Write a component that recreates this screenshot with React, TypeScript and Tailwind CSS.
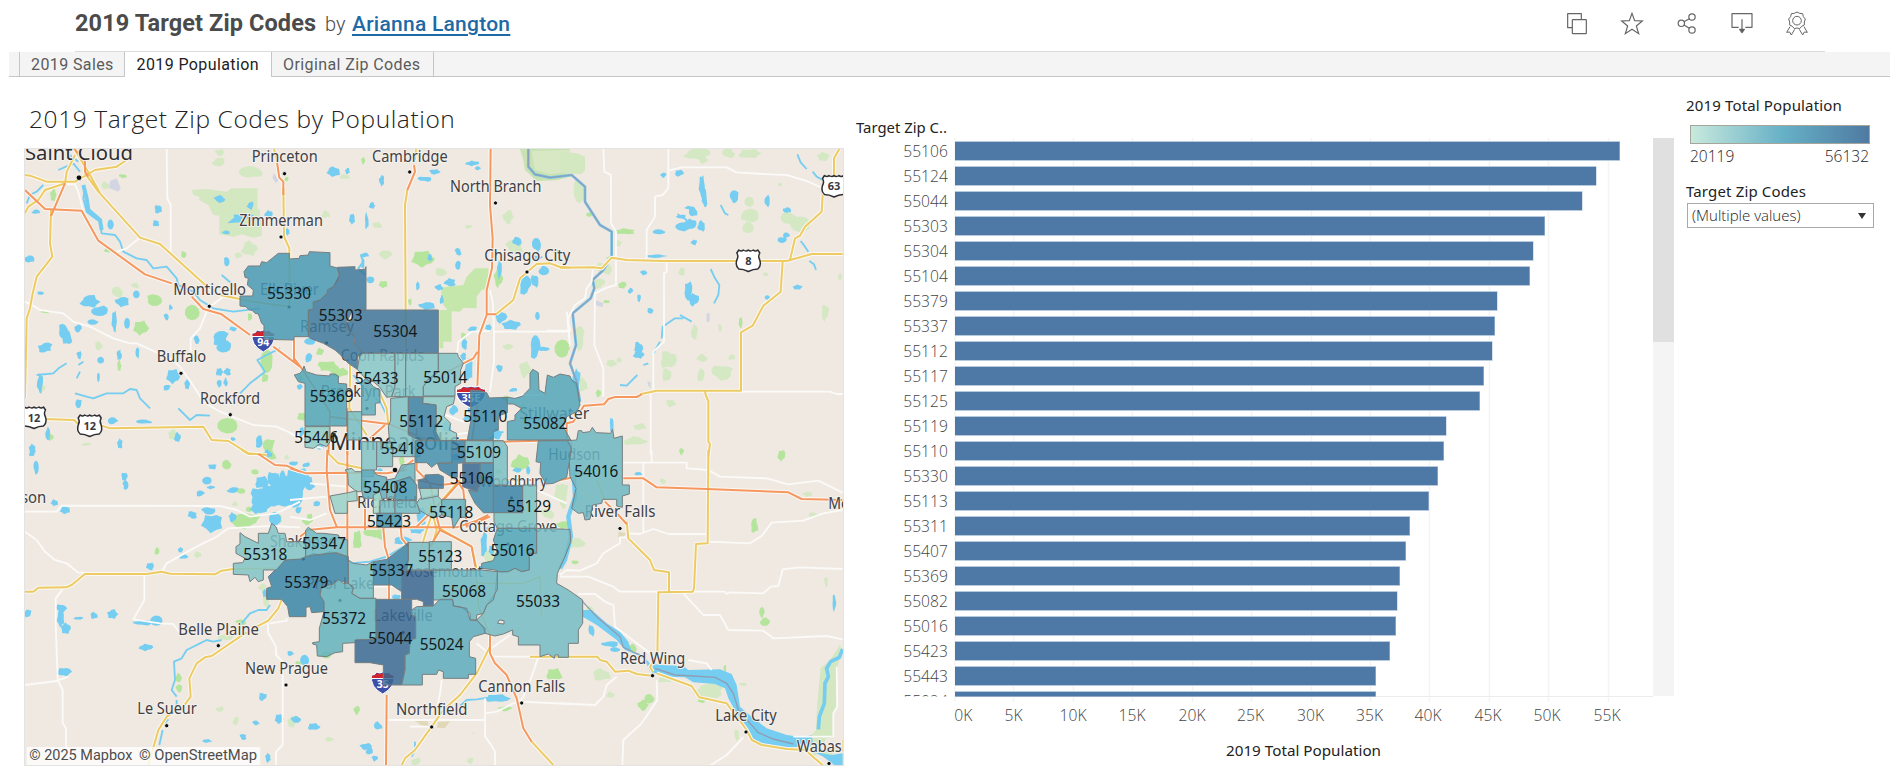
import React from "react";

type Blob = [number, number, number, number];

interface Tile {
  x: number;
  y: number;
  water: Blob[];
  park: Blob[];
  meadow: Blob[];
  streams: string[];
  minor: string[];
  highway: string[];
  freeway: string[];
}

function blobPath([cx, cy, rx, ry]: Blob): string {
  const n = 11;
  const pts: string[] = [];
  for (let i = 0; i < n; i++) {
    const h = Math.abs(Math.sin(cx * 12.9 + cy * 78.2 + i * 37.7) * 43758.5) % 1;
    const r = 0.68 + h * 0.55;
    const a = (i / n) * Math.PI * 2;
    pts.push(`${(cx + Math.cos(a) * rx * r).toFixed(1)},${(cy + Math.sin(a) * ry * r).toFixed(1)}`);
  }
  return `M${pts.join("L")}Z`;
}

const blobs = (list: Blob[]) => list.map(blobPath).join("");

const tiles: Tile[] = [
  {
    x: 20,
    y: 145,
    water: [
      [48, 200, 12, 7], [415, 192, 12, 14], [408, 235, 10, 10], [272, 238, 9, 14], [602, 163, 12, 10], [693, 180, 8, 10],
      [745, 208, 12, 12], [28, 342, 14, 12], [620, 352, 10, 14], [62, 445, 12, 5], [210, 470, 28, 18], [238, 498, 28, 16],
      [306, 470, 20, 15], [350, 448, 11, 12], [283, 530, 8, 30], [322, 535, 9, 16], [175, 550, 10, 14], [130, 560, 16, 22], [142, 578, 15, 20],
      [218, 530, 15, 8], [75, 608, 22, 16], [178, 630, 8, 12], [242, 645, 10, 10], [298, 630, 7, 18], [352, 625, 6, 16],
      [235, 695, 4, 15], [60, 715, 9, 30], [460, 695, 20, 22], [440, 728, 12, 8], [502, 718, 8, 15], [600, 580, 26, 22],
      [610, 606, 28, 20], [640, 552, 12, 7], [598, 680, 11, 12], [622, 680, 11, 12], [597, 715, 8, 10], [617, 712, 6, 13],
      [530, 585, 8, 14], [440, 515, 8, 10], [452, 487, 6, 8], [175, 775, 10, 16], [277, 828, 15, 12], [370, 830, 24, 7],
      [84, 865, 9, 18], [300, 898, 8, 15], [473, 878, 10, 15], [37, 912, 10, 15], [718, 890, 13, 18], [640, 882, 7, 7],
      [655, 215, 16, 8], [618, 262, 12, 6], [802, 260, 7, 12], [690, 215, 20, 7],
    ],
    park: [
      [100, 150, 9, 18], [402, 468, 26, 18], [518, 502, 20, 20], [362, 550, 22, 22], [262, 315, 10, 8], [490, 328, 8, 10],
      [75, 500, 13, 5], [298, 662, 6, 16], [742, 650, 18, 32], [690, 515, 7, 12], [800, 102, 7, 7], [625, 842, 30, 22],
      [745, 900, 20, 24], [90, 877, 10, 12], [735, 700, 10, 14], [308, 93, 12, 6],
    ],
    meadow: [
      [690, 82, 36, 20], [597, 50, 20, 14], [600, 22, 15, 10], [290, 440, 18, 18], [345, 422, 12, 8], [235, 605, 12, 14],
      [690, 312, 24, 22], [655, 330, 14, 8], [66, 730, 9, 10], [257, 123, 12, 12], [458, 868, 14, 16], [198, 898, 14, 5],
    ],
    streams: [
      "M195,125L190,160L200,200L215,212L240,230L245,265L285,270L300,290L310,320L350,340L380,345L400,370L440,365L470,400L475,420L520,440L540,465L580,490L640,500L720,490",
      "M165,745L200,755L220,760L260,745L310,745L330,732L350,735L360,760L390,790",
      "M475,790L510,825L530,810L570,812",
      "M780,610L740,630L712,645L735,680L690,715L660,745",
      "M50,690L100,685L118,668L140,655M175,660L190,650M170,700L180,680",
      "M115,75L160,55L180,80M150,30L175,50M20,175L30,150L50,140L70,120",
      "M605,390L640,420L655,440",
    ],
    minor: [
      "M440,10L442,160L452,180V320", "M130,118H165L175,140L190,200", "M290,320L320,310L360,278",
      "M15,470L45,485L60,495L130,505L160,530L210,545L280,580L330,595L350,595L450,640L480,665L520,722L550,770L600,800L650,820L700,840L770,845L825,870",
      "M560,500L540,550L512,580V620", "M570,485L610,455",
    ],
    highway: [
      "M0,88L30,92L80,110L165,110L225,75L290,65L320,45", "M165,30L140,80L135,115L75,135L55,165L25,185L15,205",
      "M195,85L235,140L360,278L420,297L550,415L600,450L700,470L810,485", "M93,195L90,295L97,335L50,395L37,450L30,490L20,520L18,620L15,760",
      "M72,822L162,825L175,838M245,842L270,850L550,845L575,885L625,888L685,925L740,930",
      "M790,130L792,275L808,310V485", "M762,10L768,40", "M165,15L210,90L240,145",
    ],
    freeway: [
      "M15,135L75,192L185,197L235,287L375,388L455,415M515,455L550,492L605,508L690,570M760,605L840,665",
      "M135,115L93,213", "M162,10L195,50V80L205,95", "M770,45L778,98L790,110V150", "M822,585V650",
    ],
  },
  {
    x: 290,
    y: 145,
    water: [
      [130, 80, 20, 14], [172, 78, 8, 9], [275, 107, 8, 18], [405, 102, 22, 8], [435, 80, 16, 8], [548, 55, 20, 8],
      [563, 70, 9, 7], [246, 182, 9, 10], [187, 222, 9, 15], [230, 228, 6, 25], [678, 290, 16, 12], [738, 298, 14, 20],
      [740, 338, 18, 7], [505, 320, 10, 12], [505, 362, 8, 12], [384, 422, 6, 14], [480, 412, 18, 13], [447, 427, 12, 9],
      [410, 482, 24, 12], [455, 465, 6, 14], [628, 375, 7, 28], [760, 378, 18, 14], [705, 420, 18, 28], [735, 408, 12, 20],
      [632, 515, 18, 18], [665, 540, 28, 14], [800, 320, 12, 6], [743, 512, 8, 14], [735, 605, 15, 34], [762, 612, 15, 7],
      [628, 670, 9, 12], [548, 552, 15, 8], [595, 548, 10, 10], [523, 600, 9, 16], [520, 635, 8, 12], [535, 675, 13, 38],
      [670, 735, 12, 6], [492, 795, 16, 14], [243, 405, 12, 10], [420, 338, 8, 12], [62, 590, 18, 10], [58, 640, 10, 14],
      [530, 820, 12, 8], [540, 790, 8, 12], [225, 330, 14, 7], [218, 355, 6, 16], [30, 725, 8, 10], [90, 905, 12, 8],
      [470, 845, 14, 18], [450, 895, 10, 12], [620, 870, 14, 18], [35, 860, 8, 14],
    ],
    park: [
      [400, 342, 32, 24], [280, 417, 13, 11], [220, 47, 6, 11], [115, 665, 34, 16], [148, 682, 28, 14], [822, 610, 18, 24],
      [35, 815, 12, 14], [32, 700, 8, 10], [625, 400, 14, 28], [520, 575, 8, 12], [360, 470, 6, 10], [700, 790, 12, 10],
      [650, 760, 12, 7], [90, 620, 12, 10], [240, 895, 8, 12],
    ],
    meadow: [
      [285, 330, 20, 13], [452, 382, 20, 12], [262, 240, 14, 10], [535, 245, 12, 5], [655, 217, 16, 20], [108, 208, 13, 12],
      [705, 672, 16, 24], [655, 605, 14, 10], [675, 305, 25, 22], [165, 95, 16, 7],
    ],
    streams: ["M212,330L220,350L205,370L225,390", "M190,690L230,740L270,770L300,830", "M560,900L600,880L640,860"],
    minor: [
      "M600,435L608,470L612,560H840", "M612,560V650L600,740", "M500,640L505,590L545,560L600,558", "M0,865L60,900L100,910",
      "M440,800L520,830H560", "M650,765L700,750H760", "M480,870L560,860", "M830,500L840,560",
    ],
    highway: [
      "M618,508L670,465L690,400L740,357L780,355L810,366L840,368", "M352,135L345,180L348,660", "M378,12L375,45",
      "M180,660V700L178,790L230,870", "M270,745L290,790L295,840",
    ],
    freeway: [
      "M602,10L600,180L608,280L606,370L590,435V510L568,570L562,725", "M592,508H618", "M372,60L375,80L352,135",
      "M562,620L550,640L520,655L455,690", "M12,590V640L35,670L45,685L120,800L115,930", "M172,790V930",
      "M120,815L200,825L300,838L400,880L640,890L840,885", "M240,880L285,840", "M380,850V930", "M562,780L545,890",
    ],
  },
  {
    x: 560,
    y: 145,
    water: [
      [310, 90, 9, 8], [357, 84, 14, 9], [426, 122, 9, 32], [434, 160, 8, 28], [522, 154, 15, 18], [620, 168, 9, 18],
      [682, 195, 12, 10], [398, 200, 13, 18], [365, 215, 14, 5], [378, 243, 32, 14], [390, 238, 18, 16], [425, 243, 12, 16], [298, 260, 18, 7],
      [402, 292, 9, 8], [290, 333, 28, 6], [665, 284, 14, 10], [680, 270, 10, 9], [250, 382, 12, 7], [212, 437, 9, 8],
      [237, 460, 6, 13], [271, 497, 11, 8], [385, 438, 14, 26], [400, 465, 16, 18], [622, 458, 9, 8], [714, 427, 14, 7],
      [236, 610, 12, 20], [236, 630, 16, 12], [50, 700, 13, 30], [155, 838, 6, 24], [385, 188, 10, 5],
    ],
    park: [
      [195, 260, 32, 9], [186, 420, 12, 10], [542, 534, 6, 16], [115, 745, 8, 12], [365, 917, 8, 8], [665, 925, 12, 8],
      [8, 612, 24, 28], [140, 470, 10, 5], [90, 208, 10, 8], [150, 340, 10, 7],
    ],
    meadow: [
      [60, 140, 18, 42], [410, 28, 38, 18], [430, 45, 14, 10], [505, 25, 20, 14], [570, 25, 38, 14], [790, 35, 18, 14],
      [660, 118, 7, 6], [568, 170, 14, 15], [575, 215, 28, 24], [562, 248, 18, 16], [690, 222, 28, 20], [722, 238, 32, 24],
      [175, 295, 12, 10], [135, 370, 25, 20], [115, 415, 20, 14], [365, 380, 10, 12], [403, 562, 12, 20], [58, 580, 16, 34],
      [480, 550, 6, 12], [795, 502, 12, 25], [618, 388, 9, 6], [325, 645, 24, 28], [320, 690, 14, 22], [425, 640, 15, 12],
      [422, 690, 10, 22], [488, 682, 34, 22], [155, 655, 16, 12], [178, 645, 8, 8], [70, 720, 14, 20], [332, 775, 14, 10],
      [240, 845, 22, 10], [225, 888, 35, 13], [840, 395, 6, 10], [515, 637, 10, 8],
    ],
    streams: [
      "M452,372L465,400L478,420L475,450L462,475", "M482,180L495,205L505,210", "M712,28L722,52L740,72M758,80L770,95L788,105",
      "M722,288L735,305L745,320M748,348L762,358L768,375", "M280,625L300,590M305,580L308,545L345,520L370,520M360,510L395,530",
      "M180,720L200,722L232,690M250,660L265,655", "M352,208L380,225L375,245",
    ],
    minor: [
      "M130,12L133,80L153,90V235L168,260V420L140,428L105,445L103,600L130,670V755",
      "M325,12V130L308,150L285,155V215L260,255V340", "M325,77L365,67H500L530,82L630,88L680,90L740,108L790,130",
      "M320,350V380L312,385V590L280,620V735", "M272,745V930", "M545,740H810L830,747H848",
      "M98,375L95,410L80,430L75,460L45,480L22,525L30,600", "M-40,557H30",
    ],
    highway: [
      "M0,368L100,367L125,370L155,338L200,345L310,348H680L755,327H848", "M838,12L822,40V90M788,150L785,200L735,245L720,272L705,280L690,345",
      "M668,348L662,440L610,482L578,542L543,562V737H290L240,748", "M435,737L437,750L445,768V890L450,897L445,935",
    ],
    freeway: ["M245,748L230,756L165,756L145,762L132,778L72,782L60,800L40,830L20,835V880"],
  },
  {
    x: 20,
    y: 450,
    water: [
      [36, 12, 9, 8], [48, 50, 9, 20], [103, 158, 11, 9], [135, 180, 15, 11], [313, 80, 10, 14], [317, 105, 8, 12],
      [577, 50, 14, 8], [562, 92, 13, 10], [540, 130, 13, 9], [573, 112, 12, 6], [640, 120, 18, 9], [577, 218, 32, 28],
      [565, 183, 20, 12], [517, 195, 14, 12], [637, 202, 11, 14], [725, 150, 36, 30], [760, 130, 36, 30], [725, 98, 20, 18], [760, 90, 18, 28],
      [820, 95, 34, 22], [805, 140, 28, 30], [745, 12, 12, 12], [765, 205, 16, 18], [710, 175, 20, 14], [482, 300, 8, 8],
      [492, 320, 14, 7], [391, 350, 13, 11], [124, 475, 15, 14], [122, 505, 12, 25], [138, 535, 14, 16], [25, 490, 10, 14],
      [175, 505, 14, 5], [222, 497, 12, 10], [277, 492, 16, 14], [370, 518, 28, 8], [410, 512, 16, 13], [378, 592, 20, 11],
      [132, 665, 20, 14], [735, 430, 8, 14], [810, 612, 10, 8], [728, 740, 13, 12], [708, 820, 10, 8], [778, 807, 12, 14],
      [828, 808, 14, 10], [669, 860, 10, 10], [560, 873, 14, 6], [744, 922, 9, 14], [835, 180, 10, 12], [820, 40, 14, 7],
    ],
    park: [
      [620, 43, 13, 14], [705, 65, 10, 7], [665, 123, 14, 9], [682, 210, 44, 24], [410, 303, 8, 9], [665, 518, 18, 10],
      [475, 683, 9, 12], [478, 718, 10, 13], [745, 15, 24, 16], [690, 178, 14, 7], [775, 205, 10, 14], [835, 640, 8, 6],
    ],
    meadow: [
      [645, 162, 9, 8], [533, 314, 12, 9], [597, 777, 14, 7], [648, 812, 9, 13], [738, 450, 10, 28], [815, 815, 13, 18],
      [618, 562, 22, 10], [728, 412, 12, 12], [800, 22, 8, 6],
    ],
    streams: [
      "M750,465L740,480L715,480L690,490L665,520M605,570L580,575L560,570L540,580L500,600L485,625L462,635L465,690L455,720L470,740M470,750V770",
      "M445,808L435,818M428,840L418,885",
    ],
    minor: [
      "M15,185H110L125,167L600,168L650,180L690,200L770,190L840,155", "M15,245L50,270L75,305L105,330L140,340L175,368H195",
      "M425,365L440,340L530,290L590,260L625,235L750,228L840,232", "M130,415L107,445V520L113,690L128,720V820L138,835V890L150,905",
      "M15,705L110,693L145,680", "M373,375V450L340,508L420,520L460,522L480,550", "M743,515L745,550L768,590V615L788,635V885L768,905V945",
      "M800,505V512L750,520",
    ],
    highway: [
      "M15,425H40L55,413L138,412L155,405L195,372H380L425,365L450,371L585,373L605,362L640,357L760,355",
      "M785,450L775,475L745,512L710,530L660,560L575,618L555,622L530,640L508,685L512,740L490,770L440,800L415,840L385,945",
      "M665,0L685,12L715,12",
    ],
    freeway: ["M715,12L765,45L800,47L840,65"],
  },
  {
    x: 290,
    y: 450,
    water: [
      [15, 130, 24, 36], [25, 85, 40, 28], [45, 630, 13, 15], [18, 808, 15, 7], [70, 830, 18, 11], [265, 828, 12, 12],
      [228, 890, 18, 10], [238, 902, 10, 12], [255, 925, 9, 9], [620, 745, 36, 12], [582, 280, 10, 40], [605, 300, 8, 14],
      [395, 205, 14, 30], [380, 240, 25, 12], [335, 270, 28, 12], [318, 440, 12, 8], [60, 110, 14, 12], [80, 160, 12, 8],
      [225, 100, 8, 16], [270, 60, 8, 6], [500, 20, 14, 10], [50, 45, 12, 8], [680, 60, 12, 8], [600, 235, 14, 6], [715, 60, 6, 12],
    ],
    park: [
      [202, 270, 14, 28], [245, 250, 25, 13], [690, 40, 26, 28], [60, 205, 10, 14], [793, 672, 26, 18], [645, 775, 20, 8],
      [200, 780, 9, 14], [270, 250, 12, 20], [335, 30, 10, 14], [625, 65, 12, 8], [50, 215, 14, 10], [110, 615, 14, 10], [30, 135, 10, 8],
    ],
    meadow: [
      [118, 868, 13, 8], [378, 935, 15, 12], [540, 932, 10, 10], [810, 130, 16, 30], [600, 320, 20, 22], [780, 195, 14, 10],
      [770, 190, 16, 14], [550, 850, 3, 3],
    ],
    streams: ["M510,768L530,750L560,748L600,742", "M375,875V900L365,920", "M180,340L240,335L290,320L340,290"],
    minor: [
      "M295,810H585M585,745V860L600,880L615,905V945", "M455,690L450,730L440,780", "M600,620H745L725,680L700,740L690,755L840,762",
      "M560,580L590,605L660,555", "M585,790L620,785L690,750", "M360,830H425", "M0,150L110,140", "M60,100L170,110",
      "M0,200L60,210L110,190", "M250,410H330", "M640,60L660,100H700", "M740,120L830,160",
    ],
    highway: [
      "M600,590L560,670L510,735L460,780L425,830L375,900L345,925L335,945", "M725,875L790,945", "M720,620H840",
      "M510,90L430,180L410,240L395,290", "M440,230L500,265L545,290L558,350L565,470L600,555", "M115,10L145,40L215,55",
      "M560,400H700L750,380L755,500", "M420,160L440,240L425,290",
    ],
    freeway: [
      "M0,55L50,70L165,68L290,70L350,60", "M112,0L110,60L120,180L140,230", "M172,0V330", "M225,150V240",
      "M280,235L285,290L297,330V450", "M332,230L335,265L355,290", "M30,260L55,240L140,232H500L560,212L595,195",
      "M380,0V60L420,100L440,200L450,240L420,290", "M500,90L520,120L530,230L600,200", "M510,95L460,150L380,230L350,232",
      "M290,735L288,945", "M600,555V610L615,640L650,675L680,745L700,835L725,875", "M545,290L556,350", "M380,90L450,105L500,100L610,90H740",
      "M450,240L500,265L545,290", "M320,70L370,30",
    ],
  },
  {
    x: 560,
    y: 450,
    water: [[236, 72, 12, 5], [95, 540, 9, 18], [150, 582, 24, 9], [823, 458, 6, 24], [165, 598, 14, 7]],
    park: [
      [583, 228, 12, 22], [605, 488, 8, 15], [615, 512, 14, 14], [250, 765, 16, 16], [268, 745, 16, 16], [365, 5, 6, 10],
      [665, 18, 11, 16], [218, 595, 11, 16], [8, 225, 20, 12], [45, 338, 14, 6], [425, 753, 14, 6], [495, 655, 4, 12],
    ],
    meadow: [
      [308, 93, 9, 9], [742, 132, 14, 8], [50, 280, 24, 15], [90, 490, 14, 22], [125, 675, 30, 18], [152, 735, 13, 9],
      [448, 722, 46, 22], [798, 395, 6, 16], [550, 703, 14, 5], [530, 855, 7, 18], [10, 130, 14, 40], [760, 195, 16, 7], [320, 690, 30, 8],
    ],
    streams: [],
    minor: [
      "M190,38H380V55L445,60L480,80L620,85L685,103L775,92L848,128", "M275,0V38", "M250,38V245", "M200,250L240,252L280,237L325,252H440",
      "M445,275L570,280L605,258L635,218L730,212L790,190L848,180", "M0,375L20,360L60,362L110,340L130,310L180,280V262H200",
      "M0,380H85L160,410L180,425H295", "M398,425L495,425L500,432L510,427L610,430L632,410L655,408L668,358L720,352L848,357",
      "M370,430L430,495H480L505,540L610,542L640,565L800,558L848,568", "M55,432L105,432L140,458L160,465L165,530L270,610L290,630",
      "M0,760L105,765L130,740L140,705L170,680", "M290,690L292,750L245,820L190,870L187,947", "M550,862L500,915L450,947",
      "M385,630L440,640L455,660", "M700,860H820V790L832,770L830,650",
    ],
    highway: [
      "M445,0L443,280L408,282L402,415L398,425L295,427L292,620L270,650L278,665", "M200,215L205,265L270,330L282,360L327,367V425",
      "M25,620H112L120,630L140,635L165,665L205,662L230,672L275,677M290,670L395,708L418,742L500,760L530,800L560,840L575,870L605,885L680,897L735,900L790,947",
      "M110,90L135,150",
    ],
    freeway: ["M135,155L175,195L200,222", "M190,85H250L290,112L440,117L685,127L725,147L848,150", "M0,90L40,82"],
  },
];

interface Zone {
  d: string;
  c: string;
}

const zones: Zone[] = [
  { c: "#4599b4", d: "M60,168L60,198L78,200L85,208L98,212L105,220L115,222L125,250L132,255V298L222,300V290H265V210L280,208V186L300,180L322,160V150L340,140L352,122L358,105L352,84L330,78V38L268,35L265,45L240,47L238,55L208,57V40L175,40L140,68L125,65L120,78L85,78L72,95L75,112L85,115L82,135L100,150L98,168Z" },
  { c: "#3c779c", d: "M352,82L405,80V90L435,88L438,80V210H398L378,250L382,270L400,285L405,315L430,340L412,350V388L385,370L362,345L345,330L310,310L270,295L265,290V210L280,208V186L300,180L322,160V150L340,140L358,105Z" },
  { c: "#3b739a", d: "M438,210H655V340H428L405,315V300L398,285L382,270L375,250L398,240V210Z" },
  { c: "#86c6c8", d: "M428,340H525V440L515,470L500,472L478,440L460,425L440,420L412,388L418,352Z" },
  { c: "#86c6c8", d: "M525,340H557V470H515L525,440Z" },
  { c: "#80c2c7", d: "M557,340H655V395L630,420L610,440V470H557Z" },
  { c: "#7ec1c6", d: "M655,340H712L715,350L730,370L722,390L722,430L705,440V468H610V440L622,420L655,395Z" },
  { c: "#8dcbc7", d: "M610,470H705L700,492L680,500L672,530L692,550L688,570L710,580V602H650L640,575L648,545V495L608,490Z" },
  { c: "#4da4b8", d: "M223,405L240,400L248,390L252,378L258,395L290,405L330,408V402H345L355,408V430L380,432V558H255V430L235,425Z" },
  { c: "#8bcac6", d: "M255,560H330V605L320,620L300,612L280,625L255,622Z" },
  { c: "#5cadbc", d: "M425,425L440,415L460,440L480,450V488L466,490V525H425Z" },
  { c: "#74bcc4", d: "M383,515H425V600H383Z" },
  { c: "#80c3c7", d: "M425,605H470V690H460V710H425Z" },
  { c: "#78bec5", d: "M470,605H518V680H470Z" },
  { c: "#7ec1c6", d: "M512,475L565,470V585L600,600V650H518L520,620L508,600L505,560L512,540Z" },
  { c: "#3881a5", d: "M565,472L608,472L608,490L648,495V575L660,600H595L565,582Z" },
  { c: "#4290af", d: "M585,602H695V668L650,670L635,682L620,668H585Z" },
  { c: "#387fa4", d: "M695,602H735V668L712,670V712L690,708L660,690L652,670H695Z" },
  { c: "#70b9c3", d: "M735,602H820V668H735Z" },
  { c: "#3c89aa", d: "M752,450L780,452L800,458L808,474L862,472V518L835,528V570L820,575V600H742L752,545Z" },
  { c: "#79bfc5", d: "M820,602H850L862,620V735H820Z" },
  { c: "#366793", d: "M728,670H780V735L770,755L728,740Z" },
  { c: "#3e89a9", d: "M780,670H820V818H790L765,790L745,750L770,755L780,735Z" },
  { c: "#3882a8", d: "M820,737H908V818H820Z" },
  { c: "#79c1c5", d: "M908,735H950V865H832L822,845V818H908Z" },
  { c: "#50a4b9", d: "M862,472L885,475L908,468L930,445V400L938,388L955,398L957,450L975,460L982,405L1000,412L1020,402L1050,408L1055,420L1070,430L1080,495L1070,515L1040,530L1030,560L1055,605L1050,600H862V545L885,540V525L905,505L880,492H862Z" },
  { c: "#4ba0b7", d: "M955,602H1040L1055,612L1048,665L1040,712L1000,730L978,732L960,700L962,668L948,665Z" },
  { c: "#6bb6c2", d: "M1042,602L1070,600L1075,572L1085,572L1088,578L1110,575L1117,562L1128,578L1172,580L1178,568L1182,595L1207,588V735L1228,735V762L1207,768V802L1190,798V778L1148,778L1145,790L1118,795L1110,838L1095,840L1090,818L1075,820L1055,805L1068,745L1050,710L1048,665L1055,625Z" },
  { c: "#4ba3b8", d: "M832,865H950V940H928V990L905,995L885,985L865,995L845,998L825,990L785,985V970L820,962L832,930L820,900Z" },
  { c: "#74bbc5", d: "M950,865L1050,868L1052,905L1035,950L1012,1000L1010,1030L1045,1050L1088,1080V1150L1075,1170V1210H1045V1252H1015V1245H1005L1003,1255L985,1242L960,1250V1215H895V1190L878,1185V1170L850,1182L825,1188L795,1180L790,1165L770,1140L790,1120L800,1095L825,1060L832,995L865,995L885,985L905,995L928,990V940H950ZM833,1150L838,1140L852,1142V1152Z" },
  { c: "#6bb6c2", d: "M640,990H785L832,995V1050L825,1060L820,1080L800,1095L790,1120L770,1125V1140H750V1120L720,1100L700,1098L698,1080H640Z" },
  { c: "#77bdc6", d: "M565,907H628V990H545L565,960Z" },
  { c: "#72bac4", d: "M628,905H694V990H628Z" },
  { c: "#366491", d: "M545,992H640V1098H610V1085L590,1078H545Z" },
  { c: "#3883a6", d: "M460,965L500,958L545,925L565,907V960L560,990L545,992V1055L515,1035H460Z" },
  { c: "#72bcc5", d: "M385,960L400,970L440,975L460,965V1075H420L395,1060L400,1040L385,1030Z" },
  { c: "#3884a7", d: "M195,960L245,955L280,940L300,945L330,935L385,950V1030L355,1020L340,1032L305,1040L300,1065L312,1085V1115L275,1118L270,1100L258,1102V1130H208L203,1100L185,1078H140V1045L155,1040L145,1010L165,990Z" },
  { c: "#80c4c7", d: "M60,878L75,890L115,910V880H145L155,850L168,860L175,880H195L200,905L257,905V950L240,958L195,960L170,990H130V1020L115,1025L105,1012L90,1025L85,1005L40,1003V970L68,968L75,955L48,940V920L60,912Z" },
  { c: "#6ab7c1", d: "M257,870L265,862L290,880L310,880L355,885L360,895L383,900V950L350,938L280,945L257,950Z" },
  { c: "#62b2be", d: "M305,1040L340,1032L355,1018L370,1030H385L400,1045L395,1060L420,1075H468V1198L410,1200L405,1208L368,1210V1235L345,1238L320,1250L292,1248L290,1215L278,1212V1208L298,1205V1165L312,1115V1085L300,1065Z" },
  { c: "#366893", d: "M468,1078H575V1125L587,1130V1195L570,1200L568,1240L555,1245V1290L545,1335H490V1275L450,1268H405V1200L468,1198Z" },
  { c: "#5baabd", d: "M575,1110L590,1100L640,1098L660,1078H698L700,1098L740,1105L750,1140L772,1142L795,1165V1180L760,1190L748,1205V1250L767,1255V1303L745,1303V1315H670V1295L655,1290L650,1303H607V1335H545L555,1290V1245L568,1240L570,1200L587,1195V1130L575,1125Z" },
  { c: "#90ccc8", d: "M375,690L395,685L405,695H425V755L410,755L385,735L383,700Z" },
  { c: "#96d1c9", d: "M330,768L385,758L410,752L412,782L382,785V820H345Z" },
  { c: "#5eadbd", d: "M425,690H460L470,705L500,712V775H430L425,750Z" },
  { c: "#68b5c1", d: "M500,720L525,715L545,675L585,670V730L570,712L525,725V775H500Z" },
  { c: "#4399b4", d: "M525,725L570,710L590,735V780H525Z" },
  { c: "#a5dacb", d: "M460,765L480,755L490,790L478,800V820H460Z" },
  { c: "#74bec5", d: "M480,782H525V820H480Z" },
  { c: "#6eb7c2", d: "M525,782H590L600,820H525Z" },
  { c: "#4095b1", d: "M470,820H545V862H470Z" },
  { c: "#84c6c7", d: "M600,775L650,765L665,780V825L640,835L600,812L590,790Z" },
  { c: "#96d1c9", d: "M598,745H655V768L605,778Z" },
  { c: "#60b0be", d: "M665,778H737V832H720L700,865L695,832L665,825Z" },
  { c: "#38779f", d: "M595,720L615,715V705L655,703L670,710V745H595Z" },
];

const zipLabels: [string, number, number][] = [
  ["55330", 207, 162], ["55303", 362, 228], ["55304", 526, 276], ["55433", 470, 417], ["55014", 676, 415],
  ["55369", 335, 471], ["55446", 289, 595], ["55112", 604, 547], ["55110", 796, 532], ["55082", 976, 553],
  ["55418", 548, 628], ["55109", 777, 640], ["54016", 1129, 697], ["55106", 755, 718], ["55408", 496, 745],
  ["55118", 694, 818], ["55129", 927, 802], ["55423", 507, 847], ["55347", 312, 913], ["55318", 136, 944],
  ["55016", 878, 934], ["55123", 661, 951], ["55379", 259, 1028], ["55337", 514, 994], ["55068", 732, 1055],
  ["55033", 954, 1087], ["55372", 372, 1136], ["55044", 511, 1198], ["55024", 665, 1214],
];

interface Town {
  name: string;
  x: number;
  y: number;
  w: number;
  dot?: [number, number];
  size?: number;
}

const towns: Town[] = [
  { name: "Saint Cloud", x: 25, y: 160.7, w: 108, dot: [79, 177.7], size: 19 },
  { name: "Princeton", x: 251.7, y: 163, w: 66, dot: [284.5, 173.7] },
  { name: "Cambridge", x: 372, y: 162.3, w: 75.7, dot: [409.7, 172] },
  { name: "North Branch", x: 450, y: 192.7, w: 91.3, dot: [495.5, 203] },
  { name: "Zimmerman", x: 239.3, y: 226.7, w: 83.5, dot: [281, 237] },
  { name: "Chisago City", x: 484.3, y: 261.7, w: 86, dot: [527, 272] },
  { name: "Monticello", x: 173.3, y: 296, w: 72.7, dot: [209.3, 306.3] },
  { name: "Elk River", x: 260, y: 296, w: 59, dot: [289, 307] },
  { name: "Ramsey", x: 300, y: 333, w: 54, dot: [326.5, 343] },
  { name: "Coon Rapids", x: 340.7, y: 362, w: 83.3 },
  { name: "Buffalo", x: 156.7, y: 362.7, w: 49.5, dot: [181, 373.3] },
  { name: "Rockford", x: 200, y: 404.3, w: 60, dot: [230.3, 414.7] },
  { name: "Brooklyn Park", x: 320.7, y: 398, w: 94.7, dot: [367, 408.5] },
  { name: "Minneapolis", x: 330, y: 450.5, w: 130, dot: [395, 470], size: 24 },
  { name: "Stillwater", x: 519.3, y: 420, w: 70 },
  { name: "Hudson", x: 548.3, y: 461, w: 52 },
  { name: "Woodbury", x: 480, y: 487.5, w: 67, dot: [511.5, 498] },
  { name: "River Falls", x: 584.5, y: 518, w: 71, dot: [620, 528.5] },
  { name: "Richfield", x: 357, y: 509, w: 60 },
  { name: "Cottage Grove", x: 459.3, y: 533, w: 98, dot: [508, 544] },
  { name: "Shakopee", x: 270, y: 548, w: 66, dot: [303.3, 559] },
  { name: "Rosemount", x: 405, y: 578, w: 78 },
  { name: "Prior Lake", x: 306, y: 590, w: 68, dot: [340, 600.5] },
  { name: "Lakeville", x: 373.3, y: 621.5, w: 59.5, dot: [403, 632.5] },
  { name: "Belle Plaine", x: 178.3, y: 635.3, w: 80.5, dot: [218.3, 645.7] },
  { name: "New Prague", x: 245, y: 674.3, w: 83, dot: [286, 685] },
  { name: "Le Sueur", x: 137.3, y: 715, w: 59.5, dot: [166.7, 725.7] },
  { name: "Northfield", x: 396, y: 716, w: 71.5, dot: [431.7, 727] },
  { name: "Cannon Falls", x: 478.3, y: 692.3, w: 87, dot: [521.7, 703] },
  { name: "Red Wing", x: 620, y: 665, w: 65.3, dot: [652.5, 675.7] },
  { name: "Lake City", x: 715.3, y: 721.7, w: 61.5, dot: [746, 732] },
  { name: "Wabasha", x: 796.7, y: 752.7, w: 62, dot: [829, 763.5] },
  { name: "Menomonie", x: 828.3, y: 510, w: 80 },
  { name: "Hutchinson", x: -34, y: 504, w: 80.3 },
];

function Interstate({ x, y, label, wide }: { x: number; y: number; label: string; wide?: boolean }) {
  return (
    <g transform={`translate(${x} ${y}) scale(${wide ? 1.3 : 1} 1)`}>
      <path d="M-11,-8Q-8,-7 -6,-11Q-3,-9 0,-11Q3,-9 6,-11Q8,-7 11,-8Q13,4 0,11Q-13,4 -11,-8Z" fill="#3d4fa8" stroke="#ffffff" strokeWidth="1" />
      <path d="M-10.6,-7.4Q-8,-6.5 -6,-10Q-3,-8 0,-10Q3,-8 6,-10Q8,-6.5 10.6,-7.4L10.9,-5H-10.9Z" fill="#d2232e" />
      <path d="M-11,-4.5H11" stroke="#ffffff" strokeWidth="1" />
      <text x="0" y="4.5" textAnchor="middle" fontSize="10.5" fontWeight="700" fill="#ffffff" fontFamily="Noto Sans, sans-serif" textLength={wide ? 15 : 12} lengthAdjust="spacingAndGlyphs">
        {label}
      </text>
    </g>
  );
}

function UsRoute({ x, y, label }: { x: number; y: number; label: string }) {
  return (
    <g transform={`translate(${x} ${y})`}>
      <path d="M-9.5,-10.5Q-7,-8.5 -5,-10.5Q-2,-8.5 0,-10.5Q2,-8.5 5,-10.5Q7,-8.5 9.5,-10.5L11.5,-7.5Q9.5,-4 11.3,-1Q13.5,5 9.5,8.5Q5,8.5 0,11Q-5,8.5 -9.5,8.5Q-13.5,5 -11.3,-1Q-9.5,-4 -11.5,-7.5Z" fill="#ffffff" stroke="#2e2e33" strokeWidth="1.5" strokeLinejoin="round" />
      <text x="0" y="4" textAnchor="middle" fontSize="11" fontWeight="700" fill="#3a3a3f" fontFamily="Noto Sans, sans-serif">
        {label}
      </text>
    </g>
  );
}

function TerritoryMap() {
  const tile = (t: Tile) => `translate(${t.x} ${t.y}) scale(.33333)`;
  return (
    <svg width="818" height="616" viewBox="25 149 818 616" className="block">
      <rect x="25" y="149" width="818" height="616" fill="#efe9e1" />
      {tiles.map((t) => (
        <g key={`land${t.x}-${t.y}`} transform={tile(t)}>
          <path d={blobs(t.meadow)} fill="#d5e8c4" />
          <path d={blobs(t.park)} fill="#b5e59c" />
        </g>
      ))}
      <g transform="translate(20 145) scale(.33333)">
        <path d="M515,135L520,150L538,155V165L565,180L580,210L598,212V268L640,275L665,268L700,278L725,272V245L735,245L720,215V195L712,190V130H635L620,140L560,132Z" fill="#d3e7c0" />
        <path d="M270,108L290,100L302,130L295,140L268,130Z" fill="#d3d6e2" />
        <path d="M762,85L775,105L768,115L757,98Z" fill="#d3d6e2" />
        <path d="M580,158L600,150L612,165L598,175ZM645,215L665,208L662,232L622,235ZM688,172L700,178L695,195L680,185Z" fill="#75cef1" />
      </g>
      <g transform="translate(290 145) scale(.33333)">
        <path d="M690,12L700,45L705,75L740,108L800,106L840,95V12Z" fill="#c8e2b3" />
        <path d="M725,18L840,15V80L780,88L735,75Z" fill="#d8e8c4" />
        <path d="M555,370H595V430L575,435L560,455V490L520,488L510,500L475,498L460,480L452,430L470,425L520,420L530,395Z" fill="#c5e7ab" />
        <path d="M448,495H485V590H460V610H448Z" fill="#c5e7ab" />
      </g>
      <g transform="translate(560 145) scale(.33333)">
        <path d="M0,20L50,25L75,35V75L65,88L0,85Z" fill="#d3e7c0" />
        <path d="M440,505H449V530H440ZM105,465L130,475L128,485L110,482ZM262,708L272,712V730L265,722Z" fill="#d3d6e2" />
      </g>
      <g transform="translate(560 450) scale(.33333)">
        <path d="M840,585L845,600L835,640L828,700V770L820,790V865H800L760,925L740,870L768,840L772,760L782,655L810,630Z" fill="#d3e7c0" />
        <path d="M175,245L198,250L190,262H175Z" fill="#e0d8b8" />
        <path d="M770,900L830,895L815,915L848,917V925H800Z" fill="#d3e7c0" />
      </g>
      <path d="M415,721L427,719L429,727L421,725ZM438,722L450,721L445,728H437Z" fill="#e0d8b8" />
      {tiles.map((t) => (
        <g key={`water${t.x}-${t.y}`} transform={tile(t)}>
          <path d={blobs(t.water)} fill="#75cef1" />
          <path d={t.streams.join("")} fill="none" stroke="#75cef1" strokeWidth="5.5" strokeLinejoin="round" />
        </g>
      ))}
      <g transform="translate(220 240) scale(.33333)" fill="#75cef1">
        <path d="M92,760L98,745L125,750L130,738L155,742L160,705L175,700L180,715L185,690L200,725L218,700L250,705L275,712L278,735L255,740L245,760L225,765L222,790L195,800L175,795L160,800L145,790L140,815L120,820L95,800L105,785Z" />
        <path d="M180,700L190,690L205,725L200,745L175,740Z" />
      </g>
      <g transform="translate(20 145) scale(.33333)">
        <path d="M190,120L200,160L205,195L240,225L245,255" fill="none" stroke="#75cef1" strokeWidth="12" />
      </g>
      <g transform="translate(560 450) scale(.33333)">
        <path d="M68,480H95L140,520L180,545L205,575L215,605L242,612L270,640L300,645L370,648L385,660L480,658L515,672L530,705L540,770L580,805L620,835L680,855L730,862L755,855L760,885L720,890L650,895L590,883L565,850L530,790L505,745L495,715L465,702L400,697L375,682L330,680L270,665L255,630L240,618L195,600L170,570L110,525L68,500Z" fill="#75cef1" />
        <path d="M815,915L848,910V947H825L790,920L760,905Z" fill="#75cef1" />
        <path d="M848,597L838,622L812,635L800,655L805,680L795,700L793,760L778,800L775,838" fill="none" stroke="#75cef1" strokeWidth="11" />
        <path d="M40,60L45,140L25,200L33,260L15,330L0,355" fill="none" stroke="#75cef1" strokeWidth="13" />
        <path d="M68,455L110,500L180,560L190,592L240,615M285,655L345,675L400,678L465,682L500,700L520,730L535,780L595,848L640,867L700,882" fill="none" stroke="#8f9db3" strokeWidth="4" />
      </g>
      <g transform="translate(560 145) scale(.33333)" fill="none" strokeLinejoin="round">
        <path d="M-95,12V65L-75,88L-30,98L35,90L75,125V170L120,240L155,260V335L130,375L98,405L103,430L92,460L38,505L48,600L30,655L50,710L60,770" stroke="#75bfe6" strokeWidth="8" />
        <path d="M-95,12V65L-75,88L-30,98L35,90L75,125V170L120,240L155,260V335L130,375L98,405L103,430L92,460L38,505L48,600L30,655L50,710L60,770" stroke="#8c9fba" strokeWidth="3.5" />
      </g>
      {tiles.map((t) => (
        <g key={`case${t.x}-${t.y}`} transform={tile(t)} fill="none" strokeLinejoin="round">
          <path d={t.minor.join("")} stroke="#fbfaf8" strokeWidth="5.5" />
          <path d={t.highway.join("") + t.freeway.join("")} stroke="#fbf8f3" strokeWidth="12" />
        </g>
      ))}
      {tiles.map((t) => (
        <g key={`road${t.x}-${t.y}`} transform={tile(t)} fill="none" strokeLinejoin="round">
          <path d={t.highway.join("")} stroke="#edcb62" strokeWidth="6" />
          <path d={t.freeway.join("")} stroke="#f6975f" strokeWidth="6" />
        </g>
      ))}
      {towns.map((t) => (
        <g key={t.name}>
          {t.dot && <circle cx={t.dot[0]} cy={t.dot[1]} r={t.size ? 2.8 : 2.1} fill="#0b0b0b" stroke="#ffffff" strokeWidth=".8" />}
          <text
            x={t.x}
            y={t.y - 0.7}
            fontSize={t.size ?? 15.5}
            textLength={t.w}
            lengthAdjust="spacingAndGlyphs"
            fontFamily="Noto Sans, Open Sans, sans-serif"
            fontWeight="400"
            fill={t.size ? "#2e2e30" : "#3f4044"}
            stroke="#f5f1ec"
            strokeWidth="2"
            paintOrder="stroke"
            strokeLinejoin="round"
          >
            {t.name}
          </text>
        </g>
      ))}
      <Interstate x={263.3} y={341} label="94" />
      <Interstate x={471} y={397} label="35E" wide />
      <Interstate x={382.7} y={683} label="35" />
      <UsRoute x={34} y={417.5} label="12" />
      <UsRoute x={89.7} y={425.5} label="12" />
      <UsRoute x={748.3} y={260.5} label="8" />
      <UsRoute x={834} y={186} label="63" />
      <g transform="translate(220 240) scale(.33333)">
        {zones.map((z) => (
          <path key={z.d} d={z.d} fill={z.c} fillOpacity=".84" fillRule="evenodd" stroke="#757d7f" strokeWidth="3" strokeLinejoin="round" />
        ))}
        {zipLabels.map(([zip, x, y]) => (
          <text key={zip} x={x - 66} y={y + 15} fontSize="47" textLength="132" lengthAdjust="spacingAndGlyphs" fill="#111a20" fontFamily="Noto Sans, Open Sans, sans-serif">
            {zip}
          </text>
        ))}
      </g>
      <rect x="26.7" y="747" width="233.5" height="18" fill="#ffffff" fillOpacity=".75" />
      <g fontSize="15" fill="#4d4d4d" fontFamily="Roboto, Liberation Sans, sans-serif">
        <text x="29.3" y="760.2" textLength="103" lengthAdjust="spacingAndGlyphs">© 2025 Mapbox</text>
        <text x="139" y="760.2" textLength="118" lengthAdjust="spacingAndGlyphs">© OpenStreetMap</text>
      </g>
    </svg>
  );
}

const bars: [string, number][] = [
  ["55106", 1620], ["55124", 1596.5], ["55044", 1582.5], ["55303", 1545], ["55304", 1533.5], ["55104", 1530],
  ["55379", 1497.5], ["55337", 1495], ["55112", 1492.5], ["55117", 1484], ["55125", 1480], ["55119", 1446.5],
  ["55110", 1444], ["55330", 1438], ["55113", 1429], ["55311", 1410], ["55407", 1406], ["55369", 1400],
  ["55082", 1397.5], ["55016", 1396], ["55423", 1390], ["55443", 1376], ["55024", 1376],
];

const ticks: [string, number, number][] = [
  ["0K", 963.3, 18], ["5K", 1013.5, 18], ["10K", 1073, 27], ["15K", 1132, 27], ["20K", 1192, 27], ["25K", 1250.5, 27],
  ["30K", 1310.5, 27], ["35K", 1369.5, 27], ["40K", 1428, 27], ["45K", 1488, 27], ["50K", 1547, 27], ["55K", 1607, 27],
];

const gridX = [955, 1013.5, 1073.5, 1132.5, 1192.5, 1251.5, 1311.5, 1370.5, 1429.5, 1489.5, 1548.5, 1608.5];

function PopulationChart() {
  return (
    <svg width="803" height="660" viewBox="850 110 803 660" className="block" fontFamily="Open Sans, Noto Sans, sans-serif">
      <clipPath id="rows">
        <rect x="850" y="138" width="803" height="558.5" />
      </clipPath>
      <text x="856" y="133" fontSize="15" fontFamily="Noto Sans, sans-serif" fill="#222222" textLength="91" lengthAdjust="spacingAndGlyphs">
        Target Zip C..
      </text>
      {gridX.map((x) => (
        <path key={x} d={`M${x},138V702`} stroke="#f4f4f4" strokeWidth="1.5" />
      ))}
      <path d="M955,696.5H1653" stroke="#ececec" />
      <g clipPath="url(#rows)">
        {bars.map(([zip, end], i) => (
          <g key={zip}>
            <text x="903.3" y={157 + i * 25} fontSize="16" fontWeight="300" fill="#444444" textLength="44.5" lengthAdjust="spacingAndGlyphs">
              {zip}
            </text>
            <rect x="955" y={141 + i * 25} width={end - 955} height="20" fill="#b8cadd" />
            <rect x="955" y={142 + i * 25} width={end - 955.5} height="18" fill="#4e79a7" />
          </g>
        ))}
      </g>
      {ticks.map(([label, x, w]) => (
        <text key={label} x={x - w / 2} y="721" fontSize="15.5" fontWeight="300" fill="#444444" textLength={w} lengthAdjust="spacingAndGlyphs">
          {label}
        </text>
      ))}
      <text x="1226" y="755.5" fontSize="15" fontFamily="Noto Sans, sans-serif" fill="#222222" textLength="155" lengthAdjust="spacingAndGlyphs">
        2019 Total Population
      </text>
    </svg>
  );
}

function Icon({ box, label, children }: { box: string; label: string; children: React.ReactNode }) {
  return (
    <button aria-label={label} className="h-[26px] w-6">
      <svg width="24" height="26" viewBox={box} fill="none" stroke="#666666" strokeWidth="3.6" strokeLinejoin="round">
        {children}
      </svg>
    </button>
  );
}

export default function App() {
  return (
    <div className="h-[780px] w-full overflow-hidden bg-white font-['Roboto','Liberation_Sans',sans-serif] text-[#333]">
      <header className="ml-[75px] flex h-[52px] w-[1750px] items-start justify-between border-b border-[#dcdcdc]">
        <div className="flex items-baseline whitespace-nowrap pt-[6px]">
          <h1 className="w-[241px] text-[23.5px] font-bold leading-[35px] tracking-[0.1px] text-[#4b4b4b]">2019 Target Zip Codes</h1>
          <span className="ml-[9px] w-[27px] text-[20px] font-light text-[#4b4b4b]">by</span>
          <a className="text-[21px] font-medium tracking-[0.25px] text-[#1f6aa5] underline decoration-2 underline-offset-[3px]">Arianna Langton</a>
        </div>
        <nav className="mr-4 flex gap-[31px] pt-[10px]">
          <Icon box="195 30 72 78" label="Duplicate">
            <path d="M216,83H203V41H244V57" />
            <rect x="217" y="59" width="42" height="42" rx="2" />
          </Icon>
          <Icon box="360 30 72 78" label="Favorite">
            <path d="M396,40L404,62L427,63L409,78L416,101L396,88L376,101L383,78L365,63L388,62Z" strokeLinejoin="miter" />
          </Icon>
          <Icon box="524 30 72 78" label="Share">
            <circle cx="543" cy="70" r="9.5" />
            <circle cx="575" cy="51" r="9.5" />
            <circle cx="575" cy="90" r="9.5" />
            <path d="M551,65L567,56M551,75L567,85" />
          </Icon>
          <Icon box="688 30 72 78" label="Download">
            <path d="M714,82H694V41H754V82H734M724,58V92" />
            <path d="M717,88H731L724,98Z" fill="#555555" />
          </Icon>
          <Icon box="855 30 72 78" label="Award">
            <path d="M891,36L899,40L908,41L910,50L916,57L913,66L913,75L905,79L899,86L891,84L883,86L877,79L869,75V66L866,57L872,50L874,41L883,40Z" strokeWidth="3" />
            <circle cx="891" cy="62" r="13" strokeWidth="3" />
            <path d="M870,80L860,97L869,96L874,105L884,88M912,80L922,97L913,96L908,105L898,88" strokeWidth="3" />
          </Icon>
        </nav>
      </header>

      <div className="ml-[9px] flex h-[25px] w-[1881px] whitespace-nowrap bg-[#f4f4f4] text-[16px] leading-[25px] tracking-[0.4px] text-[#5b5b5b]">
        <div className="w-[11px] border-b border-r border-[#c6c6c6]" />
        <div className="w-[105px] border-b border-r border-[#c6c6c6] pl-[11px]">2019 Sales</div>
        <div className="w-[146px] bg-white pl-[11.5px] text-[#222]">2019 Population</div>
        <div className="w-[163px] border-b border-x border-[#c6c6c6] pl-[11px]">Original Zip Codes</div>
        <div className="flex-1 border-b border-[#c6c6c6]" />
      </div>

      <main className="flex">
        <section className="ml-6 w-[820px]">
          <h2 className="h-[71px] whitespace-nowrap pl-[5px] pt-[25px] font-['Open_Sans','Noto_Sans',sans-serif] text-[24.5px] font-light leading-[34px] tracking-[0.6px] text-[#222]">
            2019 Target Zip Codes by Population
          </h2>
          <div className="h-[618px] border border-[#e3e3e3]">
            <TerritoryMap />
          </div>
        </section>

        <section className="ml-[6px] flex w-[824px] pt-[33px]">
          <PopulationChart />
          <div className="mt-7 h-[558px] w-[21px] bg-[#f4f4f4]">
            <div className="h-[204px] bg-[#e0e0e0]" />
          </div>
        </section>

        <aside className="ml-3 w-[190px] whitespace-nowrap pt-[17px] font-['Noto_Sans',sans-serif] text-[15px] leading-[22px] text-[#222]">
          <h3 className="tracking-[0.15px]">2019 Total Population</h3>
          <div className="ml-1 mt-[9px] h-[19px] w-[180px] border border-[#a5a59c] bg-[linear-gradient(90deg,#c8e9dd,#66b0c6_52%,#4f7aa2)]" />
          <div className="ml-[4px] flex w-[179px] justify-between pt-px font-['Open_Sans',sans-serif] text-[15.5px] font-light">
            <span>20119</span>
            <span>56132</span>
          </div>
          <h3 className="pt-[13px] tracking-[0.15px]">Target Zip Codes</h3>
          <button className="ml-px mt-px flex h-[25px] w-[187px] items-center justify-between border border-[#a9a9a9] pb-[2px] pl-1 pr-[7px] font-['Open_Sans',sans-serif] font-light">
            <span>(Multiple values)</span>
            <svg width="8" height="6" viewBox="0 0 8 6" className="mt-0.5">
              <path d="M0,0H8L4,6Z" fill="#333333" />
            </svg>
          </button>
        </aside>
      </main>
    </div>
  );
}
